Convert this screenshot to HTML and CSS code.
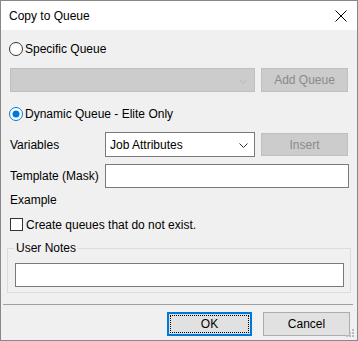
FILE: index.html
```html
<!DOCTYPE html>
<html lang="en">
<head>
  <meta charset="UTF-8" />
  <title>Copy to Queue</title>
  <link rel="stylesheet" href="styles.css">
</head>
<body>
  <div class="window">
    <div class="titlebar">
      <span class="title">Copy to Queue</span>
      <svg class="close" width="12" height="12" viewBox="0 0 12 12">
        <path d="M0.5 0.5 L11.5 11.5 M11.5 0.5 L0.5 11.5" stroke="#000" stroke-width="1" fill="none"/>
      </svg>
    </div>

    <div class="content">
      <div class="row radio-row first">
        <svg class="radio" width="14" height="14" viewBox="0 0 14 14">
          <circle cx="7" cy="7" r="6.5" fill="#fff" stroke="#333"/>
        </svg>
        <span>Specific Queue</span>
      </div>

      <div class="row combo-row">
        <div class="combo combo-wide disabled">
          <svg class="chev" width="9" height="5" viewBox="0 0 9 5">
            <path d="M0.5 0.5 L4.5 4.5 L8.5 0.5" stroke="#b8b8b8" fill="none"/>
          </svg>
        </div>
        <button class="btn disabled">Add Queue</button>
      </div>

      <div class="row radio-row dyn">
        <svg class="radio" width="14" height="14" viewBox="0 0 14 14">
          <circle cx="7" cy="7" r="6.5" fill="#fff" stroke="#0078d7"/>
          <circle cx="7" cy="7" r="3.5" fill="#0078d7"/>
        </svg>
        <span>Dynamic Queue - Elite Only</span>
      </div>

      <div class="row field-row vars">
        <span class="label">Variables</span>
        <div class="combo combo-vars">
          <span>Job Attributes</span>
          <svg class="chev" width="9" height="5" viewBox="0 0 9 5">
            <path d="M0.5 0.5 L4.5 4.5 L8.5 0.5" stroke="#333" fill="none"/>
          </svg>
        </div>
        <button class="btn disabled insert">Insert</button>
      </div>

      <div class="row field-row tmpl">
        <span class="label">Template (Mask)</span>
        <div class="textbox grow"></div>
      </div>

      <div class="row example">Example</div>

      <div class="row check-row">
        <span class="checkbox"></span>
        <span>Create queues that do not exist.</span>
      </div>

      <fieldset class="group">
        <legend>User Notes</legend>
        <div class="textbox"></div>
      </fieldset>

      <div class="separator"></div>

      <div class="buttons">
        <button class="btn ok"><span class="focus">OK</span></button>
        <button class="btn cancel">Cancel</button>
      </div>
    </div>

    <svg class="grip" width="8" height="8" viewBox="0 0 8 8">
      <rect x="6" y="0" width="2" height="2" fill="#bcbcbc"/>
      <rect x="3" y="3" width="2" height="2" fill="#bcbcbc"/>
      <rect x="6" y="3" width="2" height="2" fill="#bcbcbc"/>
      <rect x="0" y="6" width="2" height="2" fill="#bcbcbc"/>
      <rect x="3" y="6" width="2" height="2" fill="#bcbcbc"/>
      <rect x="6" y="6" width="2" height="2" fill="#bcbcbc"/>
    </svg>
  </div>
</body>
</html>
```

FILE: styles.css
```css
* {
  box-sizing: border-box;
}

body {
  margin: 0;
  font-family: 'Liberation Sans', Arial, sans-serif;
  font-size: 12px;
  color: #000;
  background: #fff;
}

.window {
  position: relative;
  width: 358px;
  height: 341px;
  border: 1px solid #888;
  background: #f0f0f0;
  display: flex;
  flex-direction: column;
}

.titlebar {
  height: 29px;
  background: #fff;
  display: flex;
  align-items: center;
  justify-content: space-between;
  padding: 0 10px 0 8px;
}

.close {
  display: block;
}

.content {
  padding: 0 9px;
  display: flex;
  flex-direction: column;
}

.row {
  display: flex;
  align-items: center;
}

.radio-row {
  height: 17px;
  gap: 2px;
}

.radio {
  display: block;
  margin-left: -1px;
}

.first {
  margin-top: 10px;
}

.combo-row {
  margin-top: 11px;
  height: 24px;
  gap: 6px;
}

.combo {
  position: relative;
  height: 24px;
  display: flex;
  align-items: center;
  padding-left: 4px;
  background: #fff;
  border: 1px solid #7a7a7a;
}

.combo .chev {
  position: absolute;
  right: 6px;
  top: 10px;
}

.combo.disabled {
  background: #cccccc;
  border-color: #bfbfbf;
}

.combo-wide {
  width: 245px;
}

.btn {
  font-family: 'Liberation Sans', Arial, sans-serif;
  font-size: 12px;
  height: 24px;
  width: 87px;
  padding: 0;
  background: #e1e1e1;
  border: 1px solid #adadad;
  color: #000;
}

.btn.disabled {
  background: #cccccc;
  border-color: #bfbfbf;
  color: #8a8a8a;
}

.dyn {
  margin-top: 13px;
}

.field-row {
  gap: 0;
}

.label {
  width: 95px;
  flex: none;
}

.vars {
  margin-top: 10px;
  height: 25px;
}

.combo-vars {
  width: 150px;
  height: 25px;
  margin-right: 6px;
}

.insert {
  height: 23px;
}

.tmpl {
  margin-top: 7px;
  height: 24px;
}

.textbox {
  height: 24px;
  background: #fff;
  border: 1px solid #7a7a7a;
}

.grow {
  flex: 1;
  margin-right: -1px;
}

.example {
  margin-top: 4px;
  height: 16px;
}

.check-row {
  margin-top: 8px;
  height: 17px;
  gap: 3px;
}

.checkbox {
  width: 13px;
  height: 13px;
  background: #fff;
  border: 1px solid #333;
}

.group {
  margin: 7px -3px 0 -3px;
  padding: 0 6px 5px 7px;
  border: 1px solid #dcdcdc;
  min-width: 0;
}

.group legend {
  padding: 0 2px;
  margin-left: -1px;
  line-height: 16px;
}

.group .textbox {
  margin-top: 7px;
}

.separator {
  margin: 11px -5px 0 -7px;
  height: 1px;
  background: #a0a0a0;
}

.buttons {
  margin-top: 7px;
  margin-right: -2px;
  display: flex;
  justify-content: flex-end;
  gap: 11px;
}

.ok {
  width: 85px;
  border: 2px solid #0078d7;
  padding: 1px;
}

.ok .focus {
  display: flex;
  align-items: center;
  justify-content: center;
  height: 100%;
  border: 1px dotted #000;
}

.cancel {
  width: 87px;
}

.grip {
  position: absolute;
  right: 3px;
  bottom: 3px;
}
```
